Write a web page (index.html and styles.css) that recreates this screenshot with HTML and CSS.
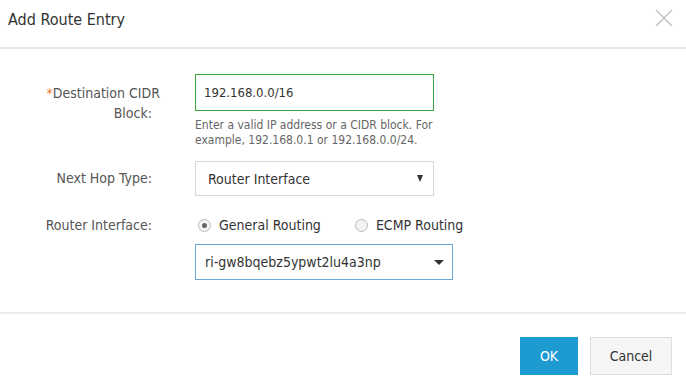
FILE: index.html
```html
<!DOCTYPE html>
<html>
<head>
    <title>Add Route Entry</title>
    <link rel="stylesheet" href="styles.css">
</head>
<body>
    <div class="dialog">
        <div class="dialog-header">
            <h1 class="dialog-title">Add Route Entry</h1>
            <span class="close-btn">
                <svg width="18" height="18" viewBox="0 0 18 18"><path d="M1 1L17 17M17 1L1 17" stroke="#c4c4c4" stroke-width="1.6" fill="none"/></svg>
            </span>
        </div>

        <form class="dialog-body">
            <div class="form-row row-cidr">
                <label class="form-label label-cidr"><span class="required">*</span>Destination CIDR<br><span class="label-tail">Block:</span></label>
                <div class="form-control">
                    <input type="text" class="text-input" value="192.168.0.0/16">
                    <p class="help">Enter a valid IP address or a CIDR block. For example, 192.168.0.1 or 192.168.0.0/24.</p>
                </div>
            </div>

            <div class="form-row">
                <label class="form-label label-select">Next Hop Type:</label>
                <div class="form-control">
                    <div class="select">
                        <span>Router Interface</span>
                        <span class="arrow arrow-small"></span>
                    </div>
                </div>
            </div>

            <div class="form-row">
                <label class="form-label label-radio">Router Interface:</label>
                <div class="form-control">
                    <div class="radio-group">
                        <span class="radio checked"></span><span class="radio-text">General Routing</span>
                        <span class="radio"></span><span class="radio-text">ECMP Routing</span>
                    </div>
                    <div class="select select-wide focus">
                        <span>ri-gw8bqebz5ypwt2lu4a3np</span>
                        <span class="arrow"></span>
                    </div>
                </div>
            </div>
        </form>

        <div class="dialog-footer">
            <button type="button" class="btn btn-primary">OK</button>
            <button type="button" class="btn">Cancel</button>
        </div>
    </div>
</body>
</html>
```

FILE: styles.css
```css
body {
    margin: 0;
    background-color: #fff;
    font-family: "DejaVu Sans Condensed", "DejaVu Sans", sans-serif;
    color: #333;
}

.dialog {
    width: 686px;
    height: 384px;
    display: flex;
    flex-direction: column;
}

.dialog-header {
    height: 47px;
    border-bottom: 2px solid #e9e9e9;
    display: flex;
    align-items: center;
    justify-content: space-between;
    padding: 0 13px 0 8px;
}

.dialog-title {
    margin: 0;
    font-size: 16px;
    font-weight: normal;
    color: #333;
    margin-top: -8px;
}

.close-btn {
    display: flex;
    margin-top: -12px;
}

.dialog-body {
    flex: 1;
    padding-top: 25px;
    border-bottom: 2px solid #ececec;
}

.form-row {
    display: flex;
    margin-bottom: 14px;
}

.row-cidr {
    margin-bottom: 13px;
}

.form-label {
    width: 160px;
    padding-right: 8px;
    box-sizing: border-box;
    text-align: right;
    font-size: 14px;
    line-height: 18px;
    color: #555;
}

.label-cidr {
    padding-right: 0;
    padding-top: 9px;
    line-height: 20px;
}

.label-tail {
    margin-right: 8px;
}

.label-select {
    padding-top: 8px;
}

.label-radio {
    padding-top: 6px;
}

.required {
    color: #e8762c;
}

.form-control {
    margin-left: 35px;
}

.text-input {
    display: block;
    width: 239px;
    height: 37px;
    box-sizing: border-box;
    border: 1px solid #3da63d;
    padding: 0 8px;
    font-family: inherit;
    font-size: 13px;
    color: #333;
    outline: none;
}

.help {
    margin: 7px 0 0;
    width: 250px;
    font-size: 12px;
    line-height: 15px;
    color: #666;
}

.select {
    width: 239px;
    height: 35px;
    box-sizing: border-box;
    border: 1px solid #d6d6d6;
    display: flex;
    align-items: center;
    justify-content: space-between;
    padding: 0 10px 0 12px;
    font-size: 14px;
    color: #333;
}

.select-wide {
    width: 258px;
    height: 36px;
    padding: 0 8px 0 9px;
}

.select.focus {
    border-color: #6ca8dc;
}

.arrow {
    width: 0;
    height: 0;
    border-left: 5px solid transparent;
    border-right: 5px solid transparent;
    border-top: 5px solid #333;
}

.arrow-small {
    border-left-width: 3.5px;
    border-right-width: 3.5px;
    border-top-width: 7px;
}

.radio-group {
    display: flex;
    align-items: center;
    height: 30px;
    margin-bottom: 4px;
}

.radio {
    width: 13px;
    height: 13px;
    border: 1px solid #bbb;
    border-radius: 50%;
    background: #f4f4f4;
    box-sizing: border-box;
    margin-left: 3px;
    position: relative;
}

.radio.checked::after {
    content: "";
    position: absolute;
    left: 3px;
    top: 3px;
    width: 5px;
    height: 5px;
    border-radius: 50%;
    background: #666;
}

.radio-text {
    font-size: 14px;
    color: #333;
    margin-left: 8px;
    margin-right: 31px;
}

.dialog-footer {
    height: 70px;
    display: flex;
    justify-content: flex-end;
    align-items: flex-start;
    padding: 23px 14px 0 0;
    box-sizing: border-box;
    gap: 12px;
}

.btn {
    height: 38px;
    padding: 0 16px;
    min-width: 82px;
    font-family: inherit;
    font-size: 14px;
    border: 1px solid #ddd;
    background-color: #f5f5f5;
    color: #333;
}

.btn-primary {
    min-width: 58px;
    border-color: #1d9bd1;
    background-color: #1d9bd1;
    color: #fff;
}
```
